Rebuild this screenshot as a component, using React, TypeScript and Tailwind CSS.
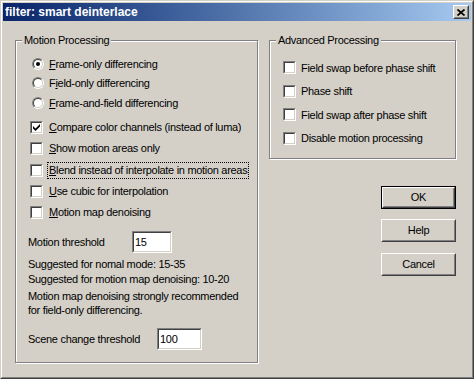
import type { ReactNode } from "react";

function CheckBox({ checked }: { checked?: boolean }) {
  return (
    <span className="flex h-[13px] w-[13px] shrink-0 border border-t-[#808080] border-l-[#808080] border-b-white border-r-white">
      <span className="flex flex-1 items-center justify-center border border-t-[#404040] border-l-[#404040] border-b-[#D4D0C8] border-r-[#D4D0C8] bg-white">
        {checked && (
          <svg width="7" height="7" viewBox="0 0 7 7">
            <polygon points="0,2 2.5,4.5 7,0 7,2.5 2.5,7 0,4.5" fill="#000" />
          </svg>
        )}
      </span>
    </span>
  );
}

function Radio({ checked }: { checked?: boolean }) {
  return (
    <span className="flex h-[12px] w-[12px] shrink-0 rounded-full border border-t-[#808080] border-l-[#808080] border-b-white border-r-white">
      <span className="flex flex-1 items-center justify-center rounded-full border border-t-[#404040] border-l-[#404040] border-b-[#D4D0C8] border-r-[#D4D0C8] bg-white">
        {checked && <span className="h-[4px] w-[4px] rounded-full bg-black" />}
      </span>
    </span>
  );
}

function Edit({ value, width }: { value: string; width: string }) {
  return (
    <div
      className={`flex h-[22px] ${width} shrink-0 border border-t-[#808080] border-l-[#808080] border-b-white border-r-white`}
    >
      <div className="flex flex-1 items-center border border-t-[#404040] border-l-[#404040] border-b-[#D4D0C8] border-r-[#D4D0C8] bg-white pl-[1px]">
        {value}
      </div>
    </div>
  );
}

function Button({ label, isDefault, className = "" }: { label: string; isDefault?: boolean; className?: string }) {
  return (
    <div className={`flex h-[23px] w-[75px] ${isDefault ? "border border-black" : ""} ${className}`}>
      <div className="flex flex-1 border border-t-white border-l-white border-b-[#404040] border-r-[#404040]">
        <div className="flex flex-1 items-center justify-center border border-t-[#D4D0C8] border-l-[#D4D0C8] border-b-[#808080] border-r-[#808080]">
          {label}
        </div>
      </div>
    </div>
  );
}

function Group({ title, className, children }: { title: string; className: string; children: ReactNode }) {
  return (
    <div
      className={`relative shrink-0 border border-[#808080] shadow-[inset_1px_1px_0_#fff,1px_1px_0_#fff] ${className}`}
    >
      <span className="absolute left-[6px] top-[-8px] bg-[#D4D0C8] px-[2px] leading-[14px]">{title}</span>
      {children}
    </div>
  );
}

function Mn({ children }: { children: ReactNode }) {
  return <span className="underline underline-offset-[1px]">{children}</span>;
}

const radios: { pre: string; key: string; post: string; checked?: boolean }[] = [
  { pre: "", key: "F", post: "rame-only differencing", checked: true },
  { pre: "F", key: "i", post: "eld-only differencing" },
  { pre: "", key: "F", post: "rame-and-field differencing" },
];

const checks: { key: string; post: string; checked?: boolean; focus?: boolean }[] = [
  { key: "C", post: "ompare color channels (instead of luma)", checked: true },
  { key: "S", post: "how motion areas only" },
  { key: "B", post: "lend instead of interpolate in motion areas", focus: true },
  { key: "U", post: "se cubic for interpolation" },
  { key: "M", post: "otion map denoising" },
];

const advanced = [
  "Field swap before phase shift",
  "Phase shift",
  "Field swap after phase shift",
  "Disable motion processing",
];

export default function App() {
  return (
    <div
      className="h-[379px] w-[474px] border border-t-[#D4D0C8] border-l-[#D4D0C8] border-b-[#404040] border-r-[#404040] bg-[#D4D0C8] text-[11px] tracking-[-0.3px] text-black"
      style={{ fontFamily: '"Liberation Sans", Arial, sans-serif' }}
    >
      <div className="flex h-full flex-col border border-t-white border-l-white border-b-[#808080] border-r-[#808080] p-[1px]">
        <div className="flex h-[18px] shrink-0 items-center justify-between bg-gradient-to-r from-[#0A246A] to-[#A6CAF0] pl-[2px] pr-[2px]">
          <span className="text-[12px] font-bold tracking-normal text-white">filter: smart deinterlace</span>
          <div className="flex h-[14px] w-[16px] border border-t-white border-l-white border-b-[#404040] border-r-[#404040]">
            <div className="flex flex-1 items-center justify-center border border-t-[#D4D0C8] border-l-[#D4D0C8] border-b-[#808080] border-r-[#808080] bg-[#D4D0C8]">
              <svg width="8" height="7" viewBox="0 0 8 7">
                <path d="M0.5 0.5 L7.5 6.5 M7.5 0.5 L0.5 6.5" stroke="#000" strokeWidth="1.7" />
              </svg>
            </div>
          </div>
        </div>

        <div className="flex pl-[12px] pt-[19px]">
          <Group title="Motion Processing" className="h-[323px] w-[243px]">
            <div className="flex flex-col pl-[16px] pt-[13px]">
              {radios.map((r, i) => (
                <div key={i} className="flex h-[19.5px] items-center gap-[5px] whitespace-nowrap">
                  <Radio checked={r.checked} />
                  <span>
                    {r.pre}
                    <Mn>{r.key}</Mn>
                    {r.post}
                  </span>
                </div>
              ))}
            </div>
            <div className="mt-[4.5px] flex flex-col pl-[14px]">
              {checks.map((c, i) => (
                <div key={i} className="flex h-[21.25px] items-center gap-[4px] whitespace-nowrap">
                  <CheckBox checked={c.checked} />
                  <span
                    className={`px-[1px] leading-[15px] ${c.focus ? "border border-dotted border-black" : "border border-transparent"}`}
                  >
                    <Mn>{c.key}</Mn>
                    {c.post}
                  </span>
                </div>
              ))}
            </div>
            <div className="flex flex-col pl-[12px]">
              <div className="mt-[8px] flex items-center">
                <span className="w-[104px]">Motion threshold</span>
                <Edit value="15" width="w-[40px]" />
              </div>
              <p className="mt-[4px] leading-[14px]">Suggested for nomal mode: 15-35</p>
              <p className="mt-[1px] leading-[14px]">Suggested for motion map denoising: 10-20</p>
              <p className="mt-[2.5px] leading-[14px]">
                Motion map denoising strongly recommended
                <br />
                for field-only differencing.
              </p>
              <div className="mt-[11.5px] flex items-center">
                <span className="w-[129px]">Scene change threshold</span>
                <Edit value="100" width="w-[45px]" />
              </div>
            </div>
          </Group>

          <div className="ml-[11px] flex w-[188px] flex-col">
            <Group title="Advanced Processing" className="h-[119px] w-[187px]">
              <div className="flex flex-col pl-[13px] pt-[15px]">
                {advanced.map((label) => (
                  <div key={label} className="flex h-[23.5px] items-center gap-[5px] whitespace-nowrap">
                    <CheckBox />
                    <span>{label}</span>
                  </div>
                ))}
              </div>
            </Group>
            <div className="mt-[27px] flex flex-col items-end pr-[1px]">
              <Button label="OK" isDefault />
              <Button label="Help" className="mt-[10px]" />
              <Button label="Cancel" className="mt-[11px]" />
            </div>
          </div>
        </div>
      </div>
    </div>
  );
}
